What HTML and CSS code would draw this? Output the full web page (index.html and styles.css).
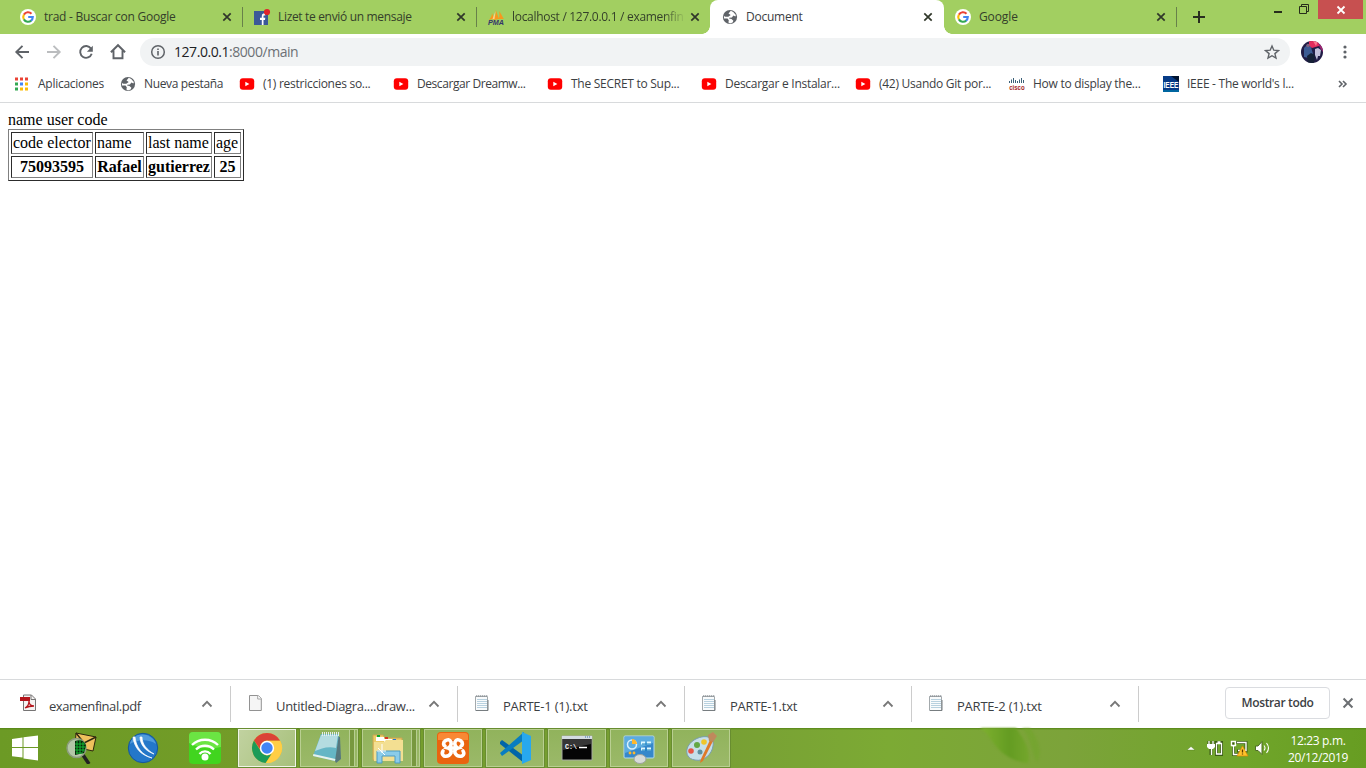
FILE: index.html
```html
<!DOCTYPE html>
<html lang="es">
<head>
<meta charset="utf-8">
<title>Document</title>
<link rel="stylesheet" href="styles.css">
</head>
<body>
<svg class="defs" width="0" height="0">
  <defs>
    <symbol id="google" viewBox="0 0 16 16"><circle cx="8" cy="8" r="8" fill="#fff"/><g fill="none" stroke-width="2.1"><path d="M3.9 5.6A4.8 4.8 0 0 1 11.5 4.7" stroke="#ea4335"/><path d="M3.9 10.4A4.8 4.8 0 0 1 3.9 5.6" stroke="#fbbc05"/><path d="M11.3 11.5A4.8 4.8 0 0 1 3.9 10.4" stroke="#34a853"/><path d="M8.2 8h4.6a4.8 4.8 0 0 1-1.8 3.7" stroke="#4285f4"/></g></symbol>
    <symbol id="globe" viewBox="0 0 16 16"><circle cx="8" cy="8" r="7.1" fill="#5f6368"/><path d="M8.8 1.8 6.5 4.5 8.7 5.9 6.3 7.7H3.4L1.9 6.9 2 9.5l3.5.1 1.3 1.6-.4 2.4 1.6 1 2.6-1.2.8-1.7-1.9-1.8-2.4-.3.2-.9 2.6-.2 1.5-1.9 2 .8.5-1.4-2.7-3.1z" fill="#fff"/></symbol>
    <symbol id="youtube" viewBox="0 0 16 16"><rect x=".8" y="2.3" width="14.4" height="11.4" rx="3" fill="#f00"/><path d="M6.3 5.7v4.6L10.4 8z" fill="#fff"/></symbol>
    <symbol id="close" viewBox="0 0 10 10"><path d="m1.3 1.3 7.4 7.4m0-7.4-7.4 7.4" stroke="currentColor" stroke-width="1.7"/></symbol>
    <symbol id="caret" viewBox="0 0 12 8"><path d="m1.5 6.5 4.5-4.6 4.5 4.6" fill="none" stroke="#777" stroke-width="1.8"/></symbol>
    <symbol id="textfile" viewBox="0 0 16 18"><path d="M1.500 2.500h12V16.500h-12z" fill="#f9fbfc" stroke="#a3a9ac"/><path d="M2 16.500h12V6" fill="none" stroke="#777d80"/><path d="M3 5.500h10M3 7.500h10M3 9.500h10M3 11.500h10M3 13.500h10" stroke="#b8d1df"/><path d="m2 3 1-2m1 2 1-2m1 2 1-2m1 2 1-2m1 2 1-2m1 2 1-2" stroke="#8b9195" stroke-width=".9"/></symbol>
  </defs>
</svg>

<header class="tabs">
  <div class="tab"><svg class="fav"><use href="#google"/></svg><span class="title">trad - Buscar con Google</span><svg class="x"><use href="#close"/></svg></div>
  <div class="tab sep"><svg class="fav" viewBox="0 0 16 16"><path d="M0 2h14v14H0z" fill="#3b5998"/><path d="M7.800 16v-5H6V8.800h1.800V7.200c0-2 1.200-3 3.500-2.800v2h-1c-.7 0-.8.4-.8 1v1.400h1.800L11 11H9.500v5z" fill="#fff"/><circle cx="13" cy="3" r="3.100" fill="#e0242b"/></svg><span class="title fb">Lizet te envió un mensaje</span><svg class="x"><use href="#close"/></svg></div>
  <div class="tab sep"><svg class="fav" viewBox="0 0 16 16"><path d="M1 11C3 9 4 6 4 4l2 5.500zM5 11c3-3 2.800-7 2.800-10L11 10zM10.500 10c1.500-2 .8-5 .8-8l4.500 8z" fill="#f8981d"/><path d="m7.500 2-3 8h2zM11.500 3 10 9z" fill="#ffd08a"/><text class="pma" x="0" y="15.500" textLength="16" lengthAdjust="spacingAndGlyphs">PMA</text></svg><span class="title clip">localhost / 127.0.0.1 / examenfin</span><svg class="x"><use href="#close"/></svg></div>
  <div class="tab active"><svg class="fav"><use href="#globe"/></svg><span class="title">Document</span><svg class="x"><use href="#close"/></svg></div>
  <div class="tab last"><svg class="fav"><use href="#google"/></svg><span class="title">Google</span><svg class="x"><use href="#close"/></svg></div>
  <svg class="plus" viewBox="0 0 12 12"><path d="M6 0v12M0 6h12" stroke="#292e20" stroke-width="2"/></svg>
  <div class="window">
    <svg class="minmax" width="40" height="16" viewBox="0 0 40 16"><path d="M2 12h8" stroke="#262d1b" stroke-width="2"/><path d="M27.500 6.500h7v7h-7zM29.500 6V4.500h7v7H35" fill="none" stroke="#262d1b"/></svg>
    <span class="quit"><svg viewBox="0 0 10 10"><path d="m1.500 1.500 7 7m0-7-7 7" stroke="#fff" stroke-width="1.800"/></svg></span>
  </div>
</header>

<nav class="toolbar">
  <svg class="navicons" width="140" height="36" viewBox="0 0 140 36" fill="none" stroke="#5f6368" stroke-width="1.900"><path d="M29 18H16.500m6-6.200-6.200 6.200 6.200 6.200"/><path d="M47 18h12.500m-6-6.200 6.200 6.200-6.200 6.200" stroke="#bbbdbf"/><path d="M91 14.600a5.900 5.900 0 1 0 .7 5.200"/><path d="M92.800 11.800v5.900h-5.900z" fill="#5f6368" stroke="none"/><path d="M110.900 18.200 118 11.200l7.100 7M113.500 16.500v7.800h9v-7.800"/></svg>
  <div class="omnibox">
    <svg width="16" height="16" viewBox="0 0 16 16"><circle cx="8" cy="8" r="6.300" fill="none" stroke="#5f6368" stroke-width="1.500"/><path d="M8 7.100v4.400M8 4.400v1.600" stroke="#5f6368" stroke-width="1.600"/></svg>
    <span class="url">127.0.0.1<i>:8000/main</i></span>
    <svg class="star" width="16" height="16" viewBox="0 0 16 16"><path d="m8 2 1.800 4.200 4.600.4-3.500 3 1.100 4.500L8 11.700l-4 2.400 1.100-4.500-3.500-3 4.600-.4z" fill="none" stroke="#5f6368" stroke-width="1.400"/></svg>
  </div>
  <svg class="avatar" width="22" height="22" viewBox="0 0 22 22"><defs><clipPath id="face"><circle cx="11" cy="11" r="11"/></clipPath></defs><g clip-path="url(#face)"><path d="M0 0h22v22H0z" fill="#211c46"/><path d="M8 0h10v5l-7 2-3-2z" fill="#e32c5d"/><path d="M12 0h5l-2 5z" fill="#ff758d"/><path d="m3 7 3-3 4 2 2 7-4 4-5-1z" fill="#3c5b93"/><circle cx="7" cy="4.500" r="1.700" fill="#7c607c"/><path d="m14 8 3-1 3 2-1 6h-2l-1 4-2-5z" fill="#c3c0dc"/><path d="m6 15 4-3 4 2-1 8H7z" fill="#152036"/><path d="m17 2 5 3v6l-3-4z" fill="#a02472"/></g></svg>
  <svg class="dots" width="4" height="16" viewBox="0 0 4 16" fill="#5f6368"><circle cx="2" cy="3" r="1.600"/><circle cx="2" cy="8" r="1.600"/><circle cx="2" cy="13" r="1.600"/></svg>
</nav>

<nav class="bookmarks">
  <a class="bm apps"><svg viewBox="0 0 16 16"><path d="M1 1.500h3v3H1zM6 1.500h3v3H6zM11 1.500h3v3h-3z" fill="#ea4335"/><path d="M1 6.500h3v3H1zM1 11.500h3v3H1z" fill="#34a853"/><path d="M6 6.500h3v3H6z" fill="#4285f4"/><path d="M11 6.500h3v3h-3zM6 11.500h3v3H6zM11 11.500h3v3h-3z" fill="#fbbc05"/></svg><span>Aplicaciones</span></a>
  <a class="bm nueva"><svg><use href="#globe"/></svg><span>Nueva pestaña</span></a>
  <a class="bm"><svg><use href="#youtube"/></svg><span>(1) restricciones so...</span></a>
  <a class="bm wide"><svg><use href="#youtube"/></svg><span>Descargar Dreamw...</span></a>
  <a class="bm"><svg><use href="#youtube"/></svg><span>The SECRET to Sup...</span></a>
  <a class="bm"><svg><use href="#youtube"/></svg><span>Descargar e Instalar...</span></a>
  <a class="bm"><svg><use href="#youtube"/></svg><span>(42) Usando Git por...</span></a>
  <a class="bm"><svg viewBox="0 0 16 16"><path d="M.5 5v2M2.500 3.500V7M4.500 2v5M6.500 4v3M8.500 5v2M10.500 3.500V7M12.500 2v5M14.500 4v3" stroke="#3b6078"/><text class="cisco" x="0.200" y="13.500" textLength="15.500" lengthAdjust="spacingAndGlyphs">cisco</text></svg><span>How to display the...</span></a>
  <a class="bm"><svg viewBox="0 0 16 16"><path d="M0 0h16v16H0z" fill="#073b86"/><path d="M8 0h8v6z" fill="#00132f"/><path d="M0 14h16v2H0z" fill="#0066a0"/><text class="ieee" x=".5" y="11.500" textLength="15" lengthAdjust="spacingAndGlyphs">IEEE</text></svg><span>IEEE - The world's l...</span></a>
  <svg class="more" width="10" height="8" viewBox="0 0 10 8"><path d="m1 1 3 3-3 3m4-6 3 3-3 3" fill="none" stroke="#5f6368" stroke-width="1.600"/></svg>
</nav>

<main class="page">
  name user code
  <table>
    <colgroup><col class="c-code"><col class="c-name"><col class="c-last"><col class="c-age"></colgroup>
    <tr><td>code elector</td><td>name</td><td>last name</td><td>age</td></tr>
    <tr><th>75093595</th><th>Rafael</th><th>gutierrez</th><th>25</th></tr>
  </table>
</main>

<section class="downloads">
  <div class="dl pdf"><svg class="file" viewBox="0 0 16 18"><path d="M3.500 1h8l4 4v11.500h-12z" fill="#f5f3f2" stroke="#767474"/><path d="M11 1v4.500h4" fill="none" stroke="#767474"/><path d="M0 3h10v4H0z" fill="#b5151c"/><path d="M5 14c2-1 4-4 4-7 0 3 2 5 5 5-4 0-7 1-9 2" fill="none" stroke="#b5151c" stroke-width="1.300"/></svg><span>examenfinal.pdf</span><svg class="caret"><use href="#caret"/></svg></div>
  <div class="dl"><svg class="file" viewBox="0 0 16 18"><path d="M2.500 1.500h8.800l3 3v12H2.500z" fill="#f5f5f5" stroke="#929292"/><path d="M10.700 1.500v3.500h3.600" fill="#fff" stroke="#a5a5a5"/></svg><span>Untitled-Diagra....draw...</span><svg class="caret"><use href="#caret"/></svg></div>
  <div class="dl txt"><svg class="file"><use href="#textfile"/></svg><span>PARTE-1 (1).txt</span><svg class="caret"><use href="#caret"/></svg></div>
  <div class="dl txt"><svg class="file"><use href="#textfile"/></svg><span>PARTE-1.txt</span><svg class="caret"><use href="#caret"/></svg></div>
  <div class="dl txt"><svg class="file"><use href="#textfile"/></svg><span>PARTE-2 (1).txt</span><svg class="caret"><use href="#caret"/></svg></div>
  <button class="showall">Mostrar todo</button>
  <svg class="shelf-x"><use href="#close"/></svg>
</section>

<footer class="taskbar">
  <svg class="leaf" width="110" height="40" viewBox="0 0 110 40"><defs><linearGradient id="blade"><stop offset="0" stop-color="#7fb12f"/><stop offset=".6" stop-color="#649c22"/><stop offset="1" stop-color="#74a62c"/></linearGradient></defs><path d="M14 0c13 7 15 31 48 35C66 22 56 9 50 0z" fill="url(#blade)"/><path d="M56 0c9 9 9 23 15 34C78 21 70 9 64 0z" fill="#72a52b" opacity=".6"/></svg>
  <div class="start"><svg width="28" height="26" viewBox="0 0 28 26" fill="#fff"><path d="m1 4 10.500-1.500V12H1zM12.500 2.300 27 .5V12H12.500zM1 13h10.500v9.600L1 21.200zM12.500 13H27v12.500l-14.500-2z"/></svg></div>
  <div class="pin"><svg viewBox="0 0 32 32"><path d="m11 1 20 4-3 14-18-4z" fill="#efc15d" stroke="#2c270d"/><path d="m11 1 8 10L31 5" fill="none" stroke="#302a10" stroke-width="1.500"/><path d="m18 23 6 9" stroke="#222" stroke-width="3.500"/><circle cx="11.500" cy="16" r="9.500" fill="#b4c7a6" stroke="#8b9c7c" stroke-width="1.500"/><path d="M10 9c7-2 10 1 11 5l-2 7-9 2z" fill="#062808"/><path d="M12 9v13m3-14v14m3-12v10M10 12h10m-10 3h11m-11 3h10m-9 3h7" stroke="#16b635" stroke-width="1"/></svg></div>
  <div class="pin"><svg viewBox="0 0 32 32"><circle cx="16" cy="16" r="14.700" fill="#2477c9" stroke="#155799"/><path d="M3 12C6-1 25 0 29 12c-7-5-18-5-26 0z" fill="#509bdc"/><path d="M6 5c1 10 7 18 19 21C15 23 9 15 8 5zm7 0c0 7 5 14 14 17-7-4-12-10-12-17z" fill="#fff" stroke="#fff" stroke-width=".7"/></svg></div>
  <div class="pin"><svg viewBox="0 0 32 32"><rect width="32" height="32" rx="4" fill="#41d51f"/><path d="M0 4q0-4 4-4h24q4 0 4 4v11Q15 19 0 11z" fill="#6be543"/><g fill="none" stroke="#fff" stroke-width="2.300"><path d="M3 13c7-7 19-7 26 0M7 17.500c5-5 13-5 18 0M10.500 22c3-3.500 8-3.500 11 0"/></g><circle cx="16" cy="25" r="3.500" fill="#fff"/></svg></div>
  <div class="task current"><svg viewBox="0 0 32 32"><circle cx="16" cy="16" r="15" fill="#e3b927"/><path d="M3 8.500A15 15 0 0 1 29 8.500H16a7 7 0 0 0-6 10z" fill="#db4437"/><path d="M3 8.500A15 15 0 0 0 14.500 31l6-9A7 7 0 0 1 10 19.500z" fill="#1b9b58"/><path d="M29.300 9H16l6 11-7 11A15 15 0 0 0 29.300 9z" fill="#ffce44"/><circle cx="16" cy="16" r="7.200" fill="#fff"/><circle cx="16" cy="16" r="5.700" fill="#4285f4"/></svg></div>
  <div class="task stack"><svg viewBox="0 0 32 32"><path d="m12 3 18 2 1 22-5 4z" fill="#56777d"/><path d="M11 2h18l-4 27-22-5z" fill="#65b6c5"/><path d="M11 3h17l-2 13C17 14 11 17 5 19z" fill="#b4dce0"/><path d="m3 24 22 5 .4-2-22-5z" fill="#e7f2ed"/><path d="M12 2h17" stroke="#e3eded" stroke-width="4" stroke-dasharray="1 1"/></svg></div>
  <div class="task stack"><svg viewBox="0 0 32 32"><path d="M1 7V3h10l2 3h17v22H1z" fill="#edcb66" stroke="#c9a552"/><path d="M4 5h8v4H4zM12 7h8v3h-8zM20 9h8v3h-8z" fill="#fff"/><path d="M5 3h3v2H5z" fill="#0ba929"/><path d="M13 5h3v2h-3z" fill="#d53425"/><path d="M21 7h3v2h-3z" fill="#2276da"/><path d="M2 10h10l2-2h17v21H2z" fill="#f3df92"/><path d="M5 31V19h23v12h-5v-7H10v7z" fill="#8bcce9" stroke="#4c9bc2"/><path d="m6 16 7 7m-3-11v9M5 19h9" stroke="#fff"/></svg></div>
  <div class="task"><svg viewBox="0 0 32 32"><rect width="32" height="32" rx="4" fill="#e9640f"/><path d="M1 4q0-3 3-3h24q3 0 3 3v4H1z" fill="#f98834"/><path d="M8 9q4-3 6 1 1 4-3 6 4 1 3 5-2 4-7 3-3-2-1-5M24 9q-4-3-6 1-1 4 3 6-4 1-3 5 2 4 7 3 3-2 1-5M11 16h10M7 10q-1 3 1 4M25 10q1 3-1 4" fill="none" stroke="#fff" stroke-width="3.600" stroke-linecap="round"/></svg></div>
  <div class="task"><svg viewBox="0 0 32 32"><path d="m1 10 2-2 22 16v7L1 12z" fill="#0065a9"/><path d="m1 21 2 3L25 8V0z" fill="#087dc1"/><path d="m23 0 9 4v24l-9 4z" fill="#28a8ee"/></svg></div>
  <div class="task"><svg viewBox="0 0 32 32"><path d="M1 4h30v24H1z" fill="#050505" stroke="#a6a9a1"/><path d="M1 4h30v3H1z" fill="#d4dce2"/><path d="M2 7h28v5L2 18z" fill="#363636"/><path d="M24 5h1m1 0h1m1 0h1" stroke="#3d72ac"/><text class="cmd" x="4" y="17" textLength="12" lengthAdjust="spacingAndGlyphs">C:\</text><path d="M18 15.500h8" stroke="#fff" stroke-width="1.500"/></svg></div>
  <div class="task"><svg viewBox="0 0 32 32"><rect x="1" y="4" width="30" height="22" rx="1" fill="#3688cb" stroke="#b4dced"/><path d="M2 5h28v6L2 21z" fill="#5cacdf"/><circle cx="9" cy="12.500" r="4.500" fill="none" stroke="#d8f0fd" stroke-width="1.500"/><path d="M9 12V7a5 5 0 0 1 5 5z" fill="#ffb72c"/><path d="M18 9.500h4v3h-4zm6 0h4v3h-4zm-6 6h4v3h-4zm6 0h4v3h-4z" fill="#dff8ff"/><path d="M19 12h9m-9 6h9" stroke="#1680bd"/><circle cx="7" cy="21" r="1.400" fill="#ffb72c"/><circle cx="11" cy="21" r="1.400" fill="#ffb72c"/><ellipse cx="17" cy="27" rx="6" ry="4.500" fill="#d7dbd9" stroke="#9da29e"/></svg></div>
  <div class="task"><svg viewBox="0 0 32 32"><path d="M9 8C19 2 30 4 28 14c-1 8-9 16-18 14-7-1-9-6-8-11 1-4 4-7 7-9z" fill="#c6dfea" stroke="#799daf"/><circle cx="6" cy="19" r="2.800" fill="#e75646"/><circle cx="12" cy="13" r="3" fill="#63a846"/><circle cx="19" cy="10" r="2.800" fill="#efc52b"/><circle cx="15" cy="20" r="2.500" fill="#5e90a0"/><path d="m25 8 3 1-10 20-3 2 1-4z" fill="#df7929"/><path d="m24 9-1-6 5-3 4 4-4 6z" fill="#bf895c"/></svg></div>
  <div class="tray">
    <svg width="85" height="18" viewBox="0 0 85 18"><path d="m2 11 4-3.500 4 3.500z" fill="#fff" stroke="#4c7718" stroke-width=".4"/>
      <g fill="none" stroke="#3c5d16" stroke-width="3"><path d="M31.500 3.500h5v12h-5zM24 2v5m4-5v5M26 9v7"/><path d="M51 3.500h10v8.500h-9M47.500 2v5M48.500 8v7.500H54"/></g>
      <path d="M31.500 4.500h5v10.500h-5zM32.500 3h3" fill="none" stroke="#fff" stroke-width="1.300"/>
      <path d="M24 2v3m4-3v3M26.500 9v7" stroke="#fff" stroke-width="1.300"/><path d="M22 5h8v3l-2 2h-4l-2-2z" fill="#fff"/>
      <path d="M52 3.500h9v8h-8M46.500 2.500h4v4h-4zM48.500 7v8.500H55" fill="none" stroke="#fff" stroke-width="1.400"/><path d="m57.500 7 5.500 10H52z" fill="#ffc32c" stroke="#d98700" stroke-width=".7"/><path d="M57.500 10.500v3m0 1v1" stroke="#563600" stroke-width="1.300"/>
      <path d="M70.500 7H73l4-4.500v13L73 11.500h-2.500z" fill="#fff" stroke="#4e6d27"/><path d="M79 6.500q2 2.500 0 5m2.500-7.500q4 5 0 10" fill="none" stroke="#fff" stroke-width="1.100"/></svg>
    <div class="clock"><span>12:23 p.m.</span><span>20/12/2019</span></div>
  </div>
</footer>
</body>
</html>
```
FILE: styles.css
```css
* { box-sizing: border-box; }
body { margin: 0; width: 1366px; height: 768px; overflow: hidden; display: flex; flex-direction: column; background: #fff; color: #3c4043; font: 12px/16px "Open Sans", "Noto Sans", sans-serif; letter-spacing: -.25px; }
svg { flex: none; display: block; }
.defs { position: absolute; }
.tabs { height: 34px; background: #a2cf61; display: flex; padding-left: 8px; color: #34402a; }
.tab { width: 234px; height: 34px; padding: 0 10px 0 12px; display: flex; align-items: center; position: relative; }
.fav { width: 16px; height: 16px; margin-right: 8px; overflow: visible; }
.title { flex: 1; white-space: nowrap; overflow: hidden; line-height: 18px; }
.fb { letter-spacing: -.33px; }
.clip { letter-spacing: -.3px; -webkit-mask-image: linear-gradient(90deg, #000 87%, transparent); mask-image: linear-gradient(90deg, #000 87%, transparent); }
.x { width: 10px; height: 10px; margin-left: 4px; color: #30372a; }
.sep::before { content: ""; position: absolute; left: 0; top: 7px; width: 1px; height: 20px; background: #68814a; }
.active { background: #fff; border-radius: 8px 8px 0 0; color: #3c4043; padding-right: 11px; }
.active::before, .active::after { content: ""; position: absolute; bottom: 0; width: 8px; height: 8px; }
.active::before { left: -8px; background: radial-gradient(circle at 0 0, transparent 7.5px, #fff 8px); }
.active::after { right: -8px; background: radial-gradient(circle at 100% 0, transparent 7.5px, #fff 8px); }
.last { width: 233px; padding-left: 11px; padding-right: 11px; letter-spacing: -.1px; }
.last::after { content: ""; position: absolute; right: 0; top: 7px; width: 1px; height: 20px; background: #68814a; }
.plus { width: 12px; height: 12px; margin: 11px 0 0 16px; }
.window { margin-left: auto; display: flex; }
.minmax { margin-right: 6px; }
.quit { width: 45px; height: 19px; background: #c75050; display: grid; place-items: center; margin-right: 3px; }
.quit svg { width: 10px; height: 10px; }
.toolbar { height: 36px; display: flex; align-items: center; }
.omnibox { width: 1150px; height: 28px; border-radius: 14px; background: #f1f3f4; display: flex; align-items: center; padding: 0 10px; }
.url { margin-left: 8px; font-size: 14px; line-height: 20px; color: #202124; letter-spacing: -.45px; }
.url i { font-style: normal; color: #6c7075; }
.star { margin-left: auto; }
.avatar { margin-left: 11px; }
.dots { margin-left: 20px; }
.bookmarks { height: 33px; border-bottom: 1px solid #d8dadc; display: flex; align-items: center; padding: 0 18px 4px 14px; }
.bm { width: 154px; display: flex; gap: 8px; white-space: nowrap; letter-spacing: -.27px; }
.bm svg { width: 16px; height: 16px; }
.wide { letter-spacing: -.43px; }
.apps { width: 106px; }
.nueva { width: 119px; letter-spacing: -.35px; }
.more { margin-left: auto; }
.pma { font: italic bold 6.5px "Liberation Sans", sans-serif; fill: #34346b; letter-spacing: 0; }
.cisco { font: bold 7px "Liberation Sans", sans-serif; fill: #a51e27; letter-spacing: 0; }
.ieee { font: bold 9px "Liberation Sans", sans-serif; fill: #fff; letter-spacing: 0; }
.bm svg, .bm text { overflow: visible; }
.cmd { font: bold 8px "Liberation Mono", monospace; fill: #fff; letter-spacing: 0; }
.page { flex: 1; padding: 8px; color: #000; font: 16px/18px "Liberation Serif", serif; letter-spacing: 0; }
.page table { table-layout: fixed; width: 236px; border: 1px solid; border-color: #808080 #2c2c2c #2c2c2c #808080; border-spacing: 2px; }
.c-code { width: 82px; }
.c-name { width: 49px; }
.c-last { width: 66px; }
.c-age { width: 27px; }
.page td, .page th { padding: 1px; border: 1px solid; border-color: #2c2c2c #808080 #808080 #2c2c2c; white-space: nowrap; }
.downloads { height: 49px; border-top: 1px solid #d8dadc; display: flex; padding-left: 4px; }
.dl { width: 227px; height: 36px; margin-top: 6px; border-right: 1px solid #ccc; padding: 8px 17px 0 16px; display: flex; font-size: 13px; line-height: 18px; letter-spacing: -.3px; }
.dl span { margin: 3px 0 0 13px; }
.pdf { letter-spacing: -.46px; }
.txt { letter-spacing: -.22px; }
.file { width: 16px; height: 18px; }
.caret { width: 12px; height: 8px; margin: 6px 0 0 auto; }
.showall { width: 105px; height: 32px; margin: 7px 0 0 86px; border: 1px solid #dadce0; border-radius: 4px; background: #fff; padding: 0; color: #3c4043; font: 600 12px/16px "Open Sans", sans-serif; letter-spacing: -.35px; }
.shelf-x { width: 12px; height: 12px; margin: 17px 0 0 12px; color: #6c6f72; }
.taskbar { height: 40px; position: relative; display: flex; background: linear-gradient(180deg, #558516 0, transparent 2px), linear-gradient(90deg, #6c9a25 0, #739c28 18%, #789f34 52%, #7caa34 65%, #7ca33a 78%, #70a52a 91%, #679d22); }
.leaf { position: absolute; left: 966px; top: 0; filter: blur(1px); }
.start { width: 50px; padding: 7px 0 0 11px; }
.pin { width: 62px; padding: 4px 15px; }
.pin svg, .task svg { width: 32px; height: 32px; }
.task { width: 58px; height: 38px; margin: 1px 2px; border: 1px solid #b9cf91; background: linear-gradient(#91b35c, #9bb969); outline: 1px solid #688d30; padding: 2px 12px; position: relative; }
.current { background: linear-gradient(120deg, #c1d2a0, #a7c07b); border-color: #f0f5e7; }
.stack { padding-left: 9px; }
.stack::after { content: ""; position: absolute; right: 2px; top: 0; width: 4px; height: 36px; border: solid #b7ce91; border-width: 0 1px; background: #78983f; }
.tray { margin-left: auto; display: flex; align-items: center; color: #fff; }
.clock { width: 96px; display: flex; flex-direction: column; text-align: center; line-height: 17px; padding-top: 2px; letter-spacing: -.35px; }
```
